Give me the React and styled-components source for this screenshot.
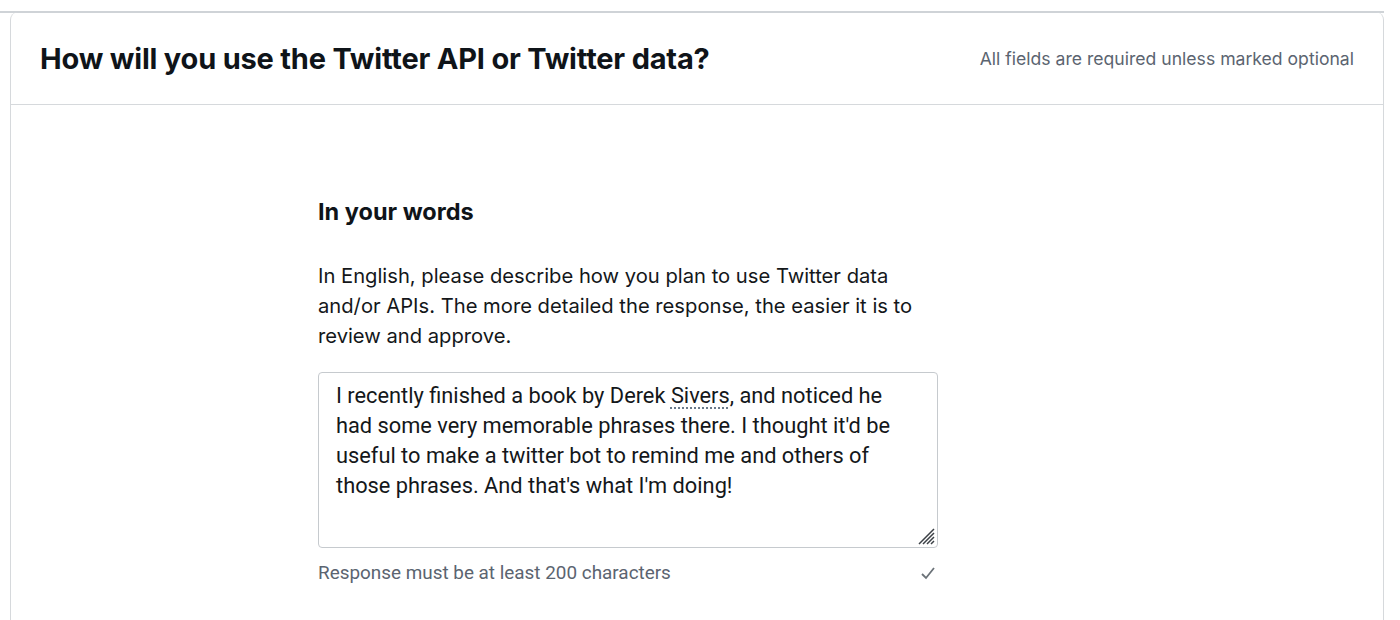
import React from 'react'
import styled, { createGlobalStyle } from 'styled-components'

const Global = createGlobalStyle`
  body {
    margin: 0;
    background: #ffffff;
    font-family: Inter, "Noto Sans", sans-serif;
    color: #14171a;
  }
`

const Page = styled.div`
  padding-top: 12px;
  &::before {
    content: '';
    display: block;
    height: 2px;
    background: #cfd3d7;
    width: 1384px;
    margin-top: -1px;
  }
`

const Card = styled.section`
  margin: -1px 16px 0 10px;
  border: 1px solid #d6d9dc;
  border-top: 0;
  border-radius: 8px 8px 0 0;
  min-height: 620px;
`

const Header = styled.header`
  height: 92px;
  display: flex;
  align-items: center;
  justify-content: space-between;
  padding: 0 29px 0 29px;
  border-bottom: 1px solid #d6d9dc;
`

const Title = styled.h1`
  margin: 0;
  font-size: 29px;
  font-weight: 700;
  letter-spacing: -0.2px;
  color: #0f1419;
`

const Note = styled.span`
  font-size: 17.6px;
  color: #5b6470;
`

const Body = styled.div`
  padding: 93px 0 0 307px;
  width: 620px;
`

const Heading = styled.h2`
  margin: 0 0 35px;
  font-size: 23.5px;
  line-height: 28px;
  font-weight: 700;
  color: #0f1419;
`

const Prompt = styled.p`
  margin: 0 0 21px;
  font-size: 20.2px;
  line-height: 30px;
  color: #14171a;
  width: 612px;
`

const Box = styled.div`
  position: relative;
  box-sizing: border-box;
  height: 176px;
  border: 1px solid #c6cace;
  border-radius: 4px;
  padding: 8px 17px;
  font-family: Roboto, "Noto Sans", sans-serif;
  font-size: 21.8px;
  line-height: 30px;
  color: #14171a;
`

const Misspelled = styled.span`
  text-decoration: underline dotted #6a7a8a;
  text-underline-offset: 4px;
  text-decoration-thickness: 2px;
`

const Grip = styled.svg`
  position: absolute;
  right: 1px;
  bottom: 1px;
`

const Help = styled.div`
  display: flex;
  justify-content: space-between;
  align-items: center;
  margin-top: 13px;
  font-family: Roboto, "Noto Sans", sans-serif;
  font-size: 18.9px;
  line-height: 24px;
  color: #5b6470;
`

const Check = styled.svg`
  margin-right: 2px;
`

export default function App() {
  return (
    <>
      <Global />
      <Page>
        <Card>
          <Header>
            <Title>How will you use the Twitter API or Twitter data?</Title>
            <Note>All fields are required unless marked optional</Note>
          </Header>
          <Body>
            <Heading>In your words</Heading>
            <Prompt>
              In English, please describe how you plan to use Twitter data and/or APIs. The more detailed the response, the easier it is to review and approve.
            </Prompt>
            <Box>
              I recently finished a book by Derek <Misspelled>Sivers</Misspelled>, and noticed he had some very memorable phrases there. I thought it'd be useful to make a twitter bot to remind me and others of those phrases. And that's what I'm doing!
              <Grip width="20" height="20" viewBox="0 0 20 20">
                <path d="M18 3 L3 18 M18 7 L7 18 M18 11 L11 18 M18 15 L15 18" stroke="#3c4146" strokeWidth="1.5" fill="none" />
              </Grip>
            </Box>
            <Help>
              <span>Response must be at least 200 characters</span>
              <Check width="16" height="14" viewBox="0 0 16 14">
                <path d="M2 8 L6 12 L14 2" stroke="#6b7278" strokeWidth="1.8" fill="none" />
              </Check>
            </Help>
          </Body>
        </Card>
      </Page>
    </>
  )
}
